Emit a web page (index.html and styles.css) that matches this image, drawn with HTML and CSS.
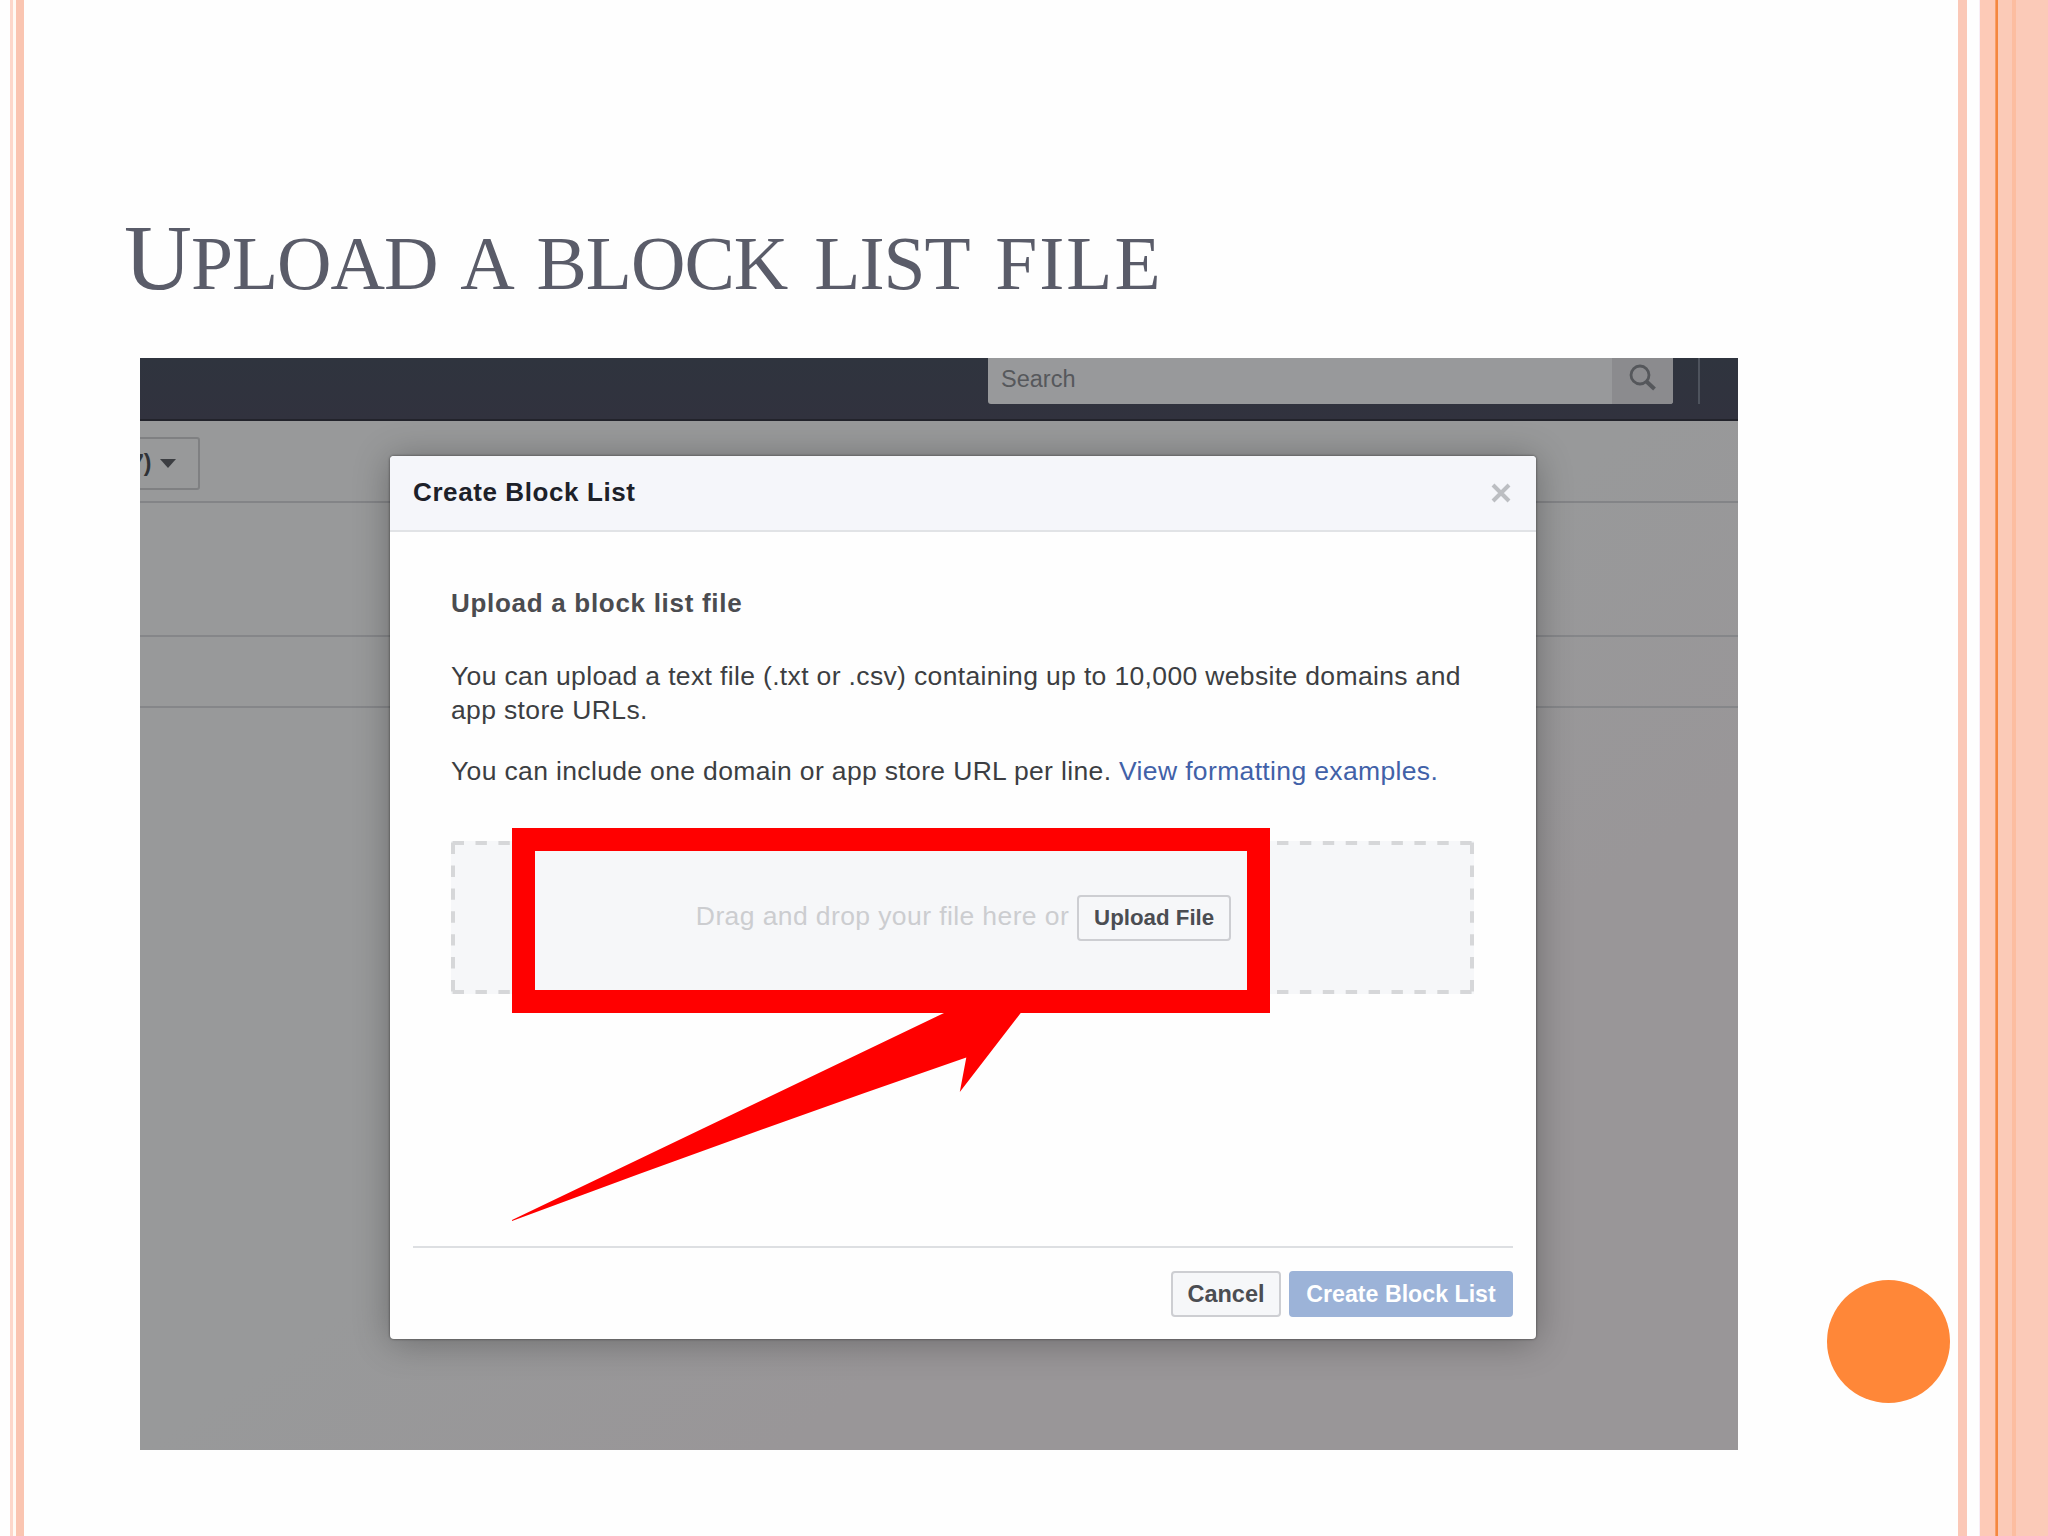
FILE: index.html
```
<!DOCTYPE html>
<html lang="en">
<head>
    <meta charset="UTF-8">
    <meta name="viewport" content="width=device-width, initial-scale=1.0">
    <title>Upload a block list file</title>
    <link rel="stylesheet" href="styles.css">
</head>
<body>
    <div class="slide">
        <div class="stripes-left"></div>

        <main class="content">
            <h1><span class="cap">U</span>PLOAD A BLOCK LIST <span class="wide">FILE</span></h1>

            <div class="shot">
                <div class="topbar">
                    <div class="search">
                        <span class="search-text">Search</span>
                        <span class="search-btn">
                            <svg width="30" height="30" viewBox="0 0 30 30">
                                <circle cx="12" cy="12" r="9" fill="none" stroke="#55575b" stroke-width="2.8"/>
                                <path d="M18.5 18.5L26.5 26" stroke="#55575b" stroke-width="4"/>
                            </svg>
                        </span>
                    </div>
                    <div class="topbar-line"></div>
                </div>
                <div class="toolbar">
                    <div class="dropdown">
                        <span>7)</span>
                        <svg width="16" height="9" viewBox="0 0 16 9"><path d="M0 0h16L8 9z" fill="#3c3e42"/></svg>
                    </div>
                </div>
                <div class="row row-big"></div>
                <div class="row"></div>

                <div class="modal">
                    <div class="modal-header">
                        <h2>Create Block List</h2>
                        <svg class="close" width="20" height="20" viewBox="0 0 20 20">
                            <path d="M2 2L18 18M18 2L2 18" stroke="#bcbec2" stroke-width="4"/>
                        </svg>
                    </div>
                    <div class="modal-body">
                        <h3>Upload a block list file</h3>
                        <p>You can upload a text file (.txt or .csv) containing up to 10,000 website domains and<br>app store URLs.</p>
                        <p class="second">You can include one domain or app store URL per line. <a>View formatting examples.</a></p>
                        <div class="dropzone">
                            <svg class="dashes" width="1023" height="153" viewBox="0 0 1023 153">
                                <path d="M0 2H1023M0 151H1023M2 0V153M1021 0V153"/>
                            </svg>
                            <span class="drop-text">Drag and drop your file here or</span>
                            <button class="btn upload">Upload File</button>
                        </div>
                    </div>
                    <div class="modal-footer">
                        <button class="btn cancel">Cancel</button>
                        <button class="btn primary">Create Block List</button>
                    </div>

                    <!-- red frame and arrow over the drop zone -->
                    <div class="frame"></div>
                    <svg class="arrow" width="512" height="212" viewBox="0 0 512 212">
                        <path d="M0 208L432 1V0H509.500L447.800 80L454.300 45.500Q230 123 0 209z" fill="#ff0000"/>
                    </svg>
                </div>
            </div>

            <div class="dot"></div>
        </main>

        <div class="stripes-right"></div>
    </div>
</body>
</html>
```

FILE: styles.css
```
* {
    margin: 0;
    padding: 0;
    box-sizing: border-box;
}

body {
    background: #fefefe;
    font-family: "Liberation Sans", Arial, sans-serif;
    overflow: hidden;
}

svg {
    display: block;
}

.slide {
    display: flex;
    width: 2048px;
    height: 1536px;
}

.stripes-left {
    width: 24px;
    background: linear-gradient(to right,
        #fefefe 10px, #fdd7ca 10px, #fdd7ca 13px,
        #fffaf4 13px, #fffaf4 16px, #fac5b1 16px);
}

.stripes-right {
    width: 90px;
    background: linear-gradient(to right,
        #fbc8b7 9px, #fefefe 9px, #fefefe 21px,
        #f8eef6 21px, #f8eef6 22px, #fdcab7 22px, #fdcab7 37px,
        #fbb791 37px, #f5873f 38px, #f5873f 40px,
        #fbcab7 40px, #fbcab7 54px, #fcbda0 54px, #fcbda0 58px, #fbcab8 58px);
}

.content {
    position: relative;
    flex: 1;
    padding: 214px 0 0 116px;
}

h1 {
    height: 144px;
    margin-left: -16px;
    font-family: "Liberation Serif", "Times New Roman", serif;
    font-size: 75.5px;
    font-weight: normal;
    line-height: 100px;
    letter-spacing: -1px;
    word-spacing: 9px;
    color: #5a5c69;
    white-space: nowrap;
}

.cap {
    font-size: 94px;
    line-height: 0;
}

.wide {
    letter-spacing: 2px;
}

.shot {
    position: relative;
    width: 1598px;
    height: 1092px;
    background: linear-gradient(to bottom right, #98999a 50%, #999698 70%);
    overflow: hidden;
}

.topbar {
    display: flex;
    justify-content: flex-end;
    height: 63px;
    padding-right: 38px;
    background: linear-gradient(#2f343e, #31323e);
    border-bottom: 2px solid #22232b;
}

.search {
    display: flex;
    width: 685px;
    height: 46px;
    background: #98999b;
    border-radius: 0 0 3px 3px;
    overflow: hidden;
}

.search-text {
    flex: 1;
    padding-left: 13px;
    font-size: 23.5px;
    line-height: 42px;
    color: #56585c;
}

.search-btn {
    width: 61px;
    padding: 5px 0 0 16px;
    background: #8b8b8e;
}

.topbar-line {
    width: 2px;
    height: 46px;
    margin-left: 25px;
    background: #4e535d;
}

.toolbar {
    height: 82px;
    padding-top: 16px;
    border-bottom: 2px solid #838487;
}

.dropdown {
    display: flex;
    align-items: center;
    gap: 9px;
    width: 75px;
    height: 53px;
    margin-left: -15px;
    padding-left: 4px;
    border: 2px solid #7f8082;
    border-radius: 3px;
    font-size: 23px;
    font-weight: bold;
    color: #303236;
}

.row {
    height: 71px;
    border-bottom: 2px solid #858689;
}

.row-big {
    height: 134px;
}

.modal {
    position: absolute;
    left: 250px;
    top: 98px;
    width: 1146px;
    height: 883px;
    background: #fefefe;
    border-radius: 4px;
    box-shadow: 0 3px 36px rgba(0, 0, 0, 0.3), 0 0 2px 1px rgba(0, 0, 0, 0.25);
}

.modal-header {
    display: flex;
    justify-content: space-between;
    align-items: center;
    height: 76px;
    padding: 0 25px 2px 23px;
    background: #f5f6fa;
    border-bottom: 2px solid #e1e3e6;
    border-radius: 4px 4px 0 0;
}

h2 {
    font-size: 26px;
    line-height: 30px;
    letter-spacing: 0.6px;
    color: #1d2129;
}

.close {
    position: relative;
    top: 1px;
}

.modal-body {
    height: 714px;
    padding: 54px 61px 0;
    font-size: 26.5px;
    line-height: 34px;
    letter-spacing: 0.35px;
    color: #3c3e42;
    white-space: nowrap;
}

h3 {
    margin-bottom: 39px;
    font-size: 26px;
    line-height: 34px;
    letter-spacing: 0.7px;
    color: #4b4c50;
}

.second {
    margin-top: 27px;
}

.modal-body a {
    color: #4161a8;
}

.dropzone {
    position: relative;
    display: flex;
    justify-content: center;
    align-items: center;
    gap: 8px;
    width: 1023px;
    height: 153px;
    margin-top: 53px;
    padding-left: 2px;
    background: #f6f7f9;
}

.dashes {
    position: absolute;
    left: 0;
    top: 0;
    fill: none;
    stroke: #d6d7d9;
    stroke-width: 4;
    stroke-dasharray: 11.4 11.5;
    stroke-dashoffset: -1.6;
}

.drop-text {
    padding-bottom: 3px;
    letter-spacing: 0.4px;
    color: #cccdd0;
}

.btn {
    height: 46px;
    border: 2px solid #cdced2;
    border-radius: 4px;
    background: #f6f7f9;
    font-family: inherit;
    font-size: 23.5px;
    font-weight: bold;
    line-height: 40px;
    color: #4b4d52;
    white-space: nowrap;
}

.upload {
    width: 154px;
    font-size: 22.3px;
}

.modal-footer {
    display: flex;
    justify-content: flex-end;
    gap: 8px;
    margin: 0 23px;
    padding-top: 23px;
    border-top: 2px solid #dddfe2;
}

.cancel {
    width: 110px;
}

.primary {
    width: 224px;
    border-color: #9cb3d8;
    background: #9cb3d8;
    font-size: 23.2px;
    color: #fff;
}

.frame {
    position: absolute;
    left: 122px;
    top: 372px;
    width: 758px;
    height: 185px;
    border: 23px solid #ff0000;
}

.arrow {
    position: absolute;
    left: 122px;
    top: 556px;
}

.dot {
    position: absolute;
    left: 1803px;
    top: 1280px;
    width: 123px;
    height: 123px;
    border-radius: 50%;
    background: #ff8738;
}
```
